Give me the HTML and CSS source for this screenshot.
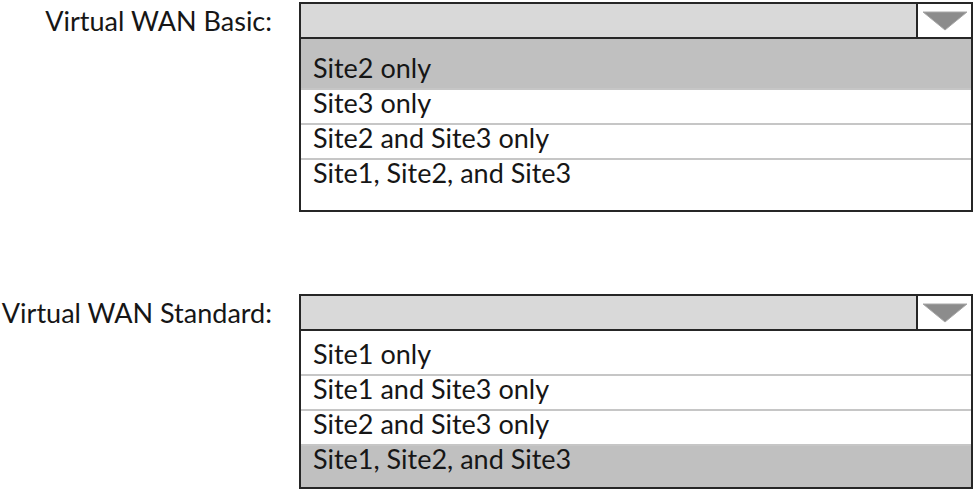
FILE: index.html
```html
<!DOCTYPE html>
<html>
<head>
<meta charset="utf-8">
<link rel="stylesheet" href="styles.css">
</head>
<body>
<div class="form">
  <div class="field">
    <div class="label">Virtual WAN Basic:</div>
    <div class="dropdown">
      <div class="head">
        <div class="value"></div>
        <div class="btn"><svg width="46" height="20" viewBox="0 0 46 20"><polygon points="1,1 45,1 23,19" fill="#8c8c8c" stroke="#a8a8a8" stroke-width="1"/></svg></div>
      </div>
      <ul class="list list-basic">
        <li class="opt selected">Site2 only</li>
        <li class="opt">Site3 only</li>
        <li class="opt">Site2 and Site3 only</li>
        <li class="opt">Site1, Site2, and Site3</li>
      </ul>
    </div>
  </div>
  <div class="field">
    <div class="label">Virtual WAN Standard:</div>
    <div class="dropdown">
      <div class="head">
        <div class="value"></div>
        <div class="btn"><svg width="46" height="20" viewBox="0 0 46 20"><polygon points="1,1 45,1 23,19" fill="#8c8c8c" stroke="#a8a8a8" stroke-width="1"/></svg></div>
      </div>
      <ul class="list list-standard">
        <li class="opt">Site1 only</li>
        <li class="opt">Site1 and Site3 only</li>
        <li class="opt">Site2 and Site3 only</li>
        <li class="opt selected">Site1, Site2, and Site3</li>
      </ul>
    </div>
  </div>
</div>
</body>
</html>
```
FILE: styles.css
```css
html, body {
  margin: 0;
  padding: 0;
  background: #ffffff;
}
body {
  padding-top: 2px;
  font-family: Lato, "Liberation Sans", sans-serif;
  font-size: 27px;
  color: #161616;
}
.form {
  display: flex;
  flex-direction: column;
  gap: 82px;
}
.field {
  display: flex;
  align-items: flex-start;
  gap: 27px;
}
.label {
  width: 272px;
  flex: none;
  display: flex;
  justify-content: flex-end;
  white-space: nowrap;
  height: 37px;
  line-height: 37px;
  padding-right: 0;
}
.dropdown {
  width: 670px;
  border: 2px solid #262626;
}
.head {
  display: flex;
  height: 33px;
  border-bottom: 2px solid #262626;
  background: #d9d9d9;
}
.value {
  flex: 1;
}
.btn {
  width: 53px;
  border-left: 2px solid #262626;
  background: #ffffff;
  display: flex;
  align-items: center;
  justify-content: center;
}
.list {
  list-style: none;
  margin: 0;
  padding: 0;
}
.opt {
  line-height: 25px;
  padding: 0 12px 8px;
  border-bottom: 2px solid #c6c6c6;
}
.opt:last-child {
  border-bottom: none;
}
.opt.selected {
  background: #c0c0c0;
}
.list-basic .opt:first-child {
  padding-top: 16px;
}
.list-basic .opt:last-child {
  padding-bottom: 25px;
}
.list-standard .opt:first-child {
  padding-top: 10px;
}
.list-standard .opt:last-child {
  padding-bottom: 16px;
}
```
